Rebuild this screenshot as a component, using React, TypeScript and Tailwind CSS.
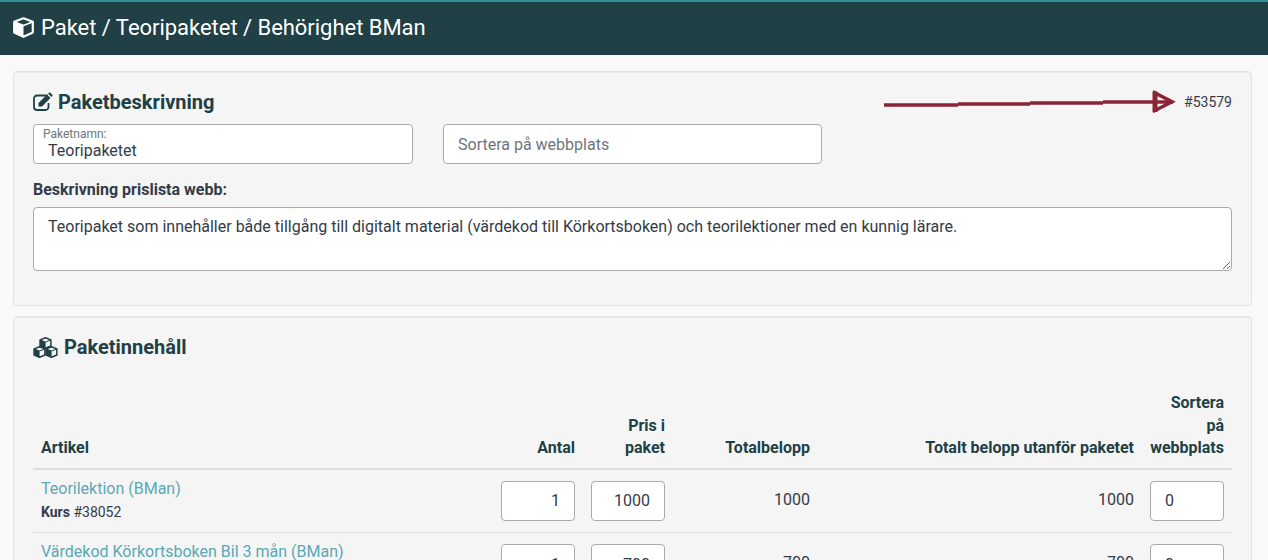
const inputClass =
  "h-10 w-[74px] rounded-[4px] border border-[#aaaaaa] bg-white px-[14px] text-base text-[#333b46] outline-none";

const rows = [
  { name: "Teorilektion (BMan)", kind: "Kurs", id: "#38052", price: "1000" },
  { name: "Värdekod Körkortsboken Bil 3 mån (BMan)", kind: "Värdekod", id: "#38053", price: "700" },
];

function CubeIcon() {
  return (
    <svg width="21" height="21" viewBox="0 0 21 21" fill="none" stroke="currentColor" strokeLinejoin="round">
      <path d="M10.500 1.300 19.800 4.800V15.400L10.500 19.800 1.200 15.400V4.800Z" strokeWidth="2.200" />
      <path d="M1.500 5 10.500 8.500 19.500 5" strokeWidth="1.800" />
      <path d="M1.500 5.500 10 8.700V19.300L1.500 15.200Z" fill="currentColor" strokeWidth="1" />
    </svg>
  );
}

function EditIcon() {
  return (
    <svg className="-translate-y-px" width="20" height="19" viewBox="0 0 20 19" fill="none">
      <path d="M14.500 3.500H4a3 3 0 0 0-3 3V15a3 3 0 0 0 3 3H12.500a3 3 0 0 0 3-3V11" stroke="currentColor" strokeWidth="1.800" />
      <path d="M5.500 11 14 2.500 17.500 6 9 14.500H5.500Z" fill="currentColor" />
      <path d="M15 1.500 16 .7q.7-.5 1.400.1l1.900 1.900q.6.700.1 1.400L18.500 5Z" fill="currentColor" />
    </svg>
  );
}

function SmallCube({ x, y }: { x: number; y: number }) {
  return (
    <g transform={`translate(${x} ${y})`} stroke="currentColor" strokeLinejoin="round">
      <path d="M6 .8 11.400 2.900V9L6 11.300 .6 9V2.900Z" fill="#f5f5f5" strokeWidth="1.500" />
      <path d="M.8 3 6 5 11.200 3" strokeWidth="1" />
      <path d="M.8 3.300 5.800 5.200V11L.8 8.800Z" fill="currentColor" strokeWidth=".5" />
    </g>
  );
}

function CubesIcon() {
  return (
    <svg width="25" height="21" viewBox="0 0 25 21" fill="none">
      <SmallCube x={6.500} y={0} />
      <SmallCube x={0.500} y={9} />
      <SmallCube x={12.500} y={9} />
    </svg>
  );
}

function Arrow() {
  return (
    <svg className="absolute left-[856px] top-[18px]" width="310" height="30" viewBox="0 0 310 30" fill="none">
      <path d="M14 15h74M88 14h72M160 13h73M233 12h70" stroke="#8a2338" strokeWidth="3.500" />
      <path d="M285 3v17.500l17-8.700z" stroke="#8a2338" strokeWidth="3.500" />
      <path d="M285 1.500v20.500" stroke="#8a2338" strokeWidth="5" />
    </svg>
  );
}

export default function App() {
  return (
    <div className="h-[560px] overflow-hidden bg-[#f9f9f9] font-['Roboto',sans-serif] text-[#333b46]">
      <header className="flex h-[55px] items-center gap-[7px] border-t-2 border-[#2e8f96] bg-[#204045] pb-[2px] pl-[13px] text-[22px] tracking-[-0.03px] text-white">
        <CubeIcon />
        <span>Paket / Teoripaketet / Behörighet BMan</span>
      </header>

      <main className="flex flex-col gap-[10px] pl-[13px] pr-4 pt-4">
        <section className="relative h-[235px] rounded-[4px] border border-[#e3e3e3] bg-[#f5f5f5] px-[19px] pt-[18px] shadow-[inset_0_1px_1px_rgba(0,0,0,0.05)]">
          <Arrow />
          <span className="absolute right-[19px] top-[21px] text-sm leading-[18px] text-[#333b46]">#53579</span>
          <h2 className="flex h-6 items-center gap-[5px] text-xl font-bold text-[#204045]">
            <EditIcon />
            Paketbeskrivning
          </h2>
          <div className="mt-[10px] flex gap-[30px]">
            <div className="flex h-10 w-[380px] flex-col rounded-[4px] border border-[#aaaaaa] bg-white pl-[9px]">
              <span className="mt-[3px] text-xs leading-[12px] text-[#6c757d]">Paketnamn:</span>
              <span className="mt-[2px] pl-[5px] text-base leading-[18px]">Teoripaketet</span>
            </div>
            <input
              className="h-10 w-[379px] rounded-[4px] border border-[#aaaaaa] bg-white px-[14px] text-base outline-none placeholder:text-[#6c757d]"
              placeholder="Sortera på webbplats"
            />
          </div>
          <label className="mt-[15px] block text-base leading-[22px] font-bold">Beskrivning prislista webb:</label>
          <textarea
            className="mt-[6px] block h-[64px] w-full rounded-[4px] border border-[#aaaaaa] bg-white px-[14px] py-[7px] text-base leading-6 outline-none"
            defaultValue="Teoripaket som innehåller både tillgång till digitalt material (värdekod till Körkortsboken) och teorilektioner med en kunnig lärare."
          />
        </section>

        <section className="rounded-[4px] border border-[#e3e3e3] bg-[#f5f5f5] px-[19px] pt-[18px] shadow-[inset_0_1px_1px_rgba(0,0,0,0.05)]">
          <h2 className="flex h-6 items-center gap-[6px] text-xl font-bold text-[#204045]">
            <CubesIcon />
            Paketinnehåll
          </h2>
          <table className="mt-[33px] w-full table-fixed border-collapse text-base">
            <colgroup>
              <col />
              <col className="w-[90px]" />
              <col className="w-[90px]" />
              <col className="w-[145px]" />
              <col className="w-[324px]" />
              <col className="w-[90px]" />
            </colgroup>
            <thead>
              <tr className="border-b-2 border-[#dddddd] align-bottom text-right leading-[22.500px] text-[#204045]">
                <th className="px-2 pb-2 text-left font-bold">Artikel</th>
                <th className="px-2 pb-2 font-bold">Antal</th>
                <th className="px-2 pb-2 font-bold">Pris i paket</th>
                <th className="px-2 pb-2 font-bold">Totalbelopp</th>
                <th className="px-2 pb-2 font-bold">Totalt belopp utanför paketet</th>
                <th className="px-2 pb-2 font-bold">Sortera på webbplats</th>
              </tr>
            </thead>
            <tbody>
              {rows.map((row) => (
                <tr key={row.name} className="h-[64px] border-b border-[#dddddd]">
                  <td className="px-2 align-top">
                    <a className="mt-2 block leading-[22px] text-[#5aa8b4]">{row.name}</a>
                    <div className="mt-[3px] text-sm leading-[18px]">
                      <b className="font-bold">{row.kind}</b> {row.id}
                    </div>
                  </td>
                  <td className="px-2 pt-[11px] align-top">
                    <input className={`${inputClass} text-right`} defaultValue="1" />
                  </td>
                  <td className="px-2 pt-[11px] align-top">
                    <input className={`${inputClass} text-right`} defaultValue={row.price} />
                  </td>
                  <td className="px-2 pt-[18px] text-right align-top">{row.price}</td>
                  <td className="px-2 pt-[18px] text-right align-top">{row.price}</td>
                  <td className="px-2 pt-[11px] align-top">
                    <input className={inputClass} defaultValue="0" />
                  </td>
                </tr>
              ))}
            </tbody>
          </table>
        </section>
      </main>
    </div>
  );
}
